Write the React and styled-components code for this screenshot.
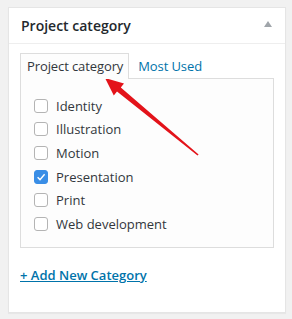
import React from "react";
import styled, { createGlobalStyle } from "styled-components";

const Global = createGlobalStyle`
	body {
		margin: 0;
		background: #f1f1f1;
		font-family: "Open Sans", "Liberation Sans", sans-serif;
		color: #32373c;
	}
`;

const categories = [
	{ name: "Identity" },
	{ name: "Illustration" },
	{ name: "Motion" },
	{ name: "Presentation", checked: true },
	{ name: "Print" },
	{ name: "Web development" },
];

export default function App() {
	return (
		<>
			<Global />
			<Page>
				<Box>
					<Header>
						<Title>Project category</Title>
						<Toggle />
					</Header>
					<Inside>
						<Tabs>
							<Tab active>Project category</Tab>
							<Tab>Most Used</Tab>
						</Tabs>
						<TabPanel>
							{categories.map((c) => (
								<Row key={c.name}>
									<Check checked={c.checked}>
										{c.checked && (
											<svg width="10" height="10" viewBox="0 0 10 10">
												<path d="M1.6 5.2 L4 7.6 L8.6 2.2" fill="none" stroke="#fff" strokeWidth="1.4" />
											</svg>
										)}
									</Check>
									<Label>{c.name}</Label>
								</Row>
							))}
						</TabPanel>
						<AddLink>+ Add New Category</AddLink>
					</Inside>
				</Box>
				<Arrow width="292" height="319" viewBox="0 0 292 319">
					<polygon
						points="105,78 124,83.5 120.8,87.4 198.6,154.4 197.5,155.6 117,91.6 113.8,95.5"
						fill="#e3131a"
					/>
				</Arrow>
			</Page>
		</>
	);
}

const Page = styled.div`
	position: relative;
	width: 292px;
	height: 319px;
	padding: 7px 6px 0 8px;
	box-sizing: border-box;
`;

const Box = styled.div`
	width: 278px;
	height: 306px;
	box-sizing: border-box;
	background: #fff;
	border: 1px solid #e5e5e5;
	box-shadow: 0 1px 1px rgba(0, 0, 0, 0.04);
`;

const Header = styled.div`
	display: flex;
	align-items: center;
	justify-content: space-between;
	height: 35px;
	padding: 0 13px 0 12px;
	border-bottom: 1px solid #eee;
`;

const Title = styled.h2`
	margin: 0;
	font-size: 14px;
	font-weight: 600;
	color: #23282d;
	line-height: 1.4;
`;

const Toggle = styled.span`
	width: 0;
	height: 0;
	border-left: 4.5px solid transparent;
	border-right: 4.5px solid transparent;
	border-bottom: 6px solid #a0a5aa;
	margin-top: -3px;
`;

const Inside = styled.div`
	padding: 8px 11px 0 11px;
`;

const Tabs = styled.div`
	display: flex;
	align-items: flex-end;
	gap: 2px;
	height: 26px;
`;

const Tab = styled.div`
	height: 26px;
	box-sizing: border-box;
	padding: 0 5px 0 6px;
	font-size: 13px;
	letter-spacing: -0.1px;
	line-height: 24px;
	color: ${(p) => (p.active ? "#32373c" : "#0073aa")};
	background: ${(p) => (p.active ? "#fdfdfd" : "transparent")};
	border: 1px solid ${(p) => (p.active ? "#ddd" : "transparent")};
	border-bottom: none;
	margin-bottom: -1px;
	position: relative;
	z-index: 1;
`;

const TabPanel = styled.div`
	height: 170px;
	box-sizing: border-box;
	background: #fdfdfd;
	border: 1px solid #ddd;
	padding: 15px 0 0 13px;
`;

const Row = styled.div`
	display: flex;
	align-items: center;
	height: 23.6px;
`;

const Check = styled.span`
	display: flex;
	align-items: center;
	justify-content: center;
	width: 14px;
	height: 14px;
	box-sizing: border-box;
	border-radius: 3px;
	border: 1px solid ${(p) => (p.checked ? "#3a8ee6" : "#b4b4b4")};
	background: ${(p) => (p.checked ? "#3a8ee6" : "#fff")};
	margin-right: 8px;
`;

const Label = styled.span`
	font-size: 13px;
	color: #32373c;
`;

const AddLink = styled.a`
	display: block;
	margin-top: 17px;
	font-size: 13px;
	font-weight: 600;
	color: #0073aa;
	text-decoration: underline;
	line-height: 20px;
`;

const Arrow = styled.svg`
	position: absolute;
	left: 0;
	top: 0;
	pointer-events: none;
`;
